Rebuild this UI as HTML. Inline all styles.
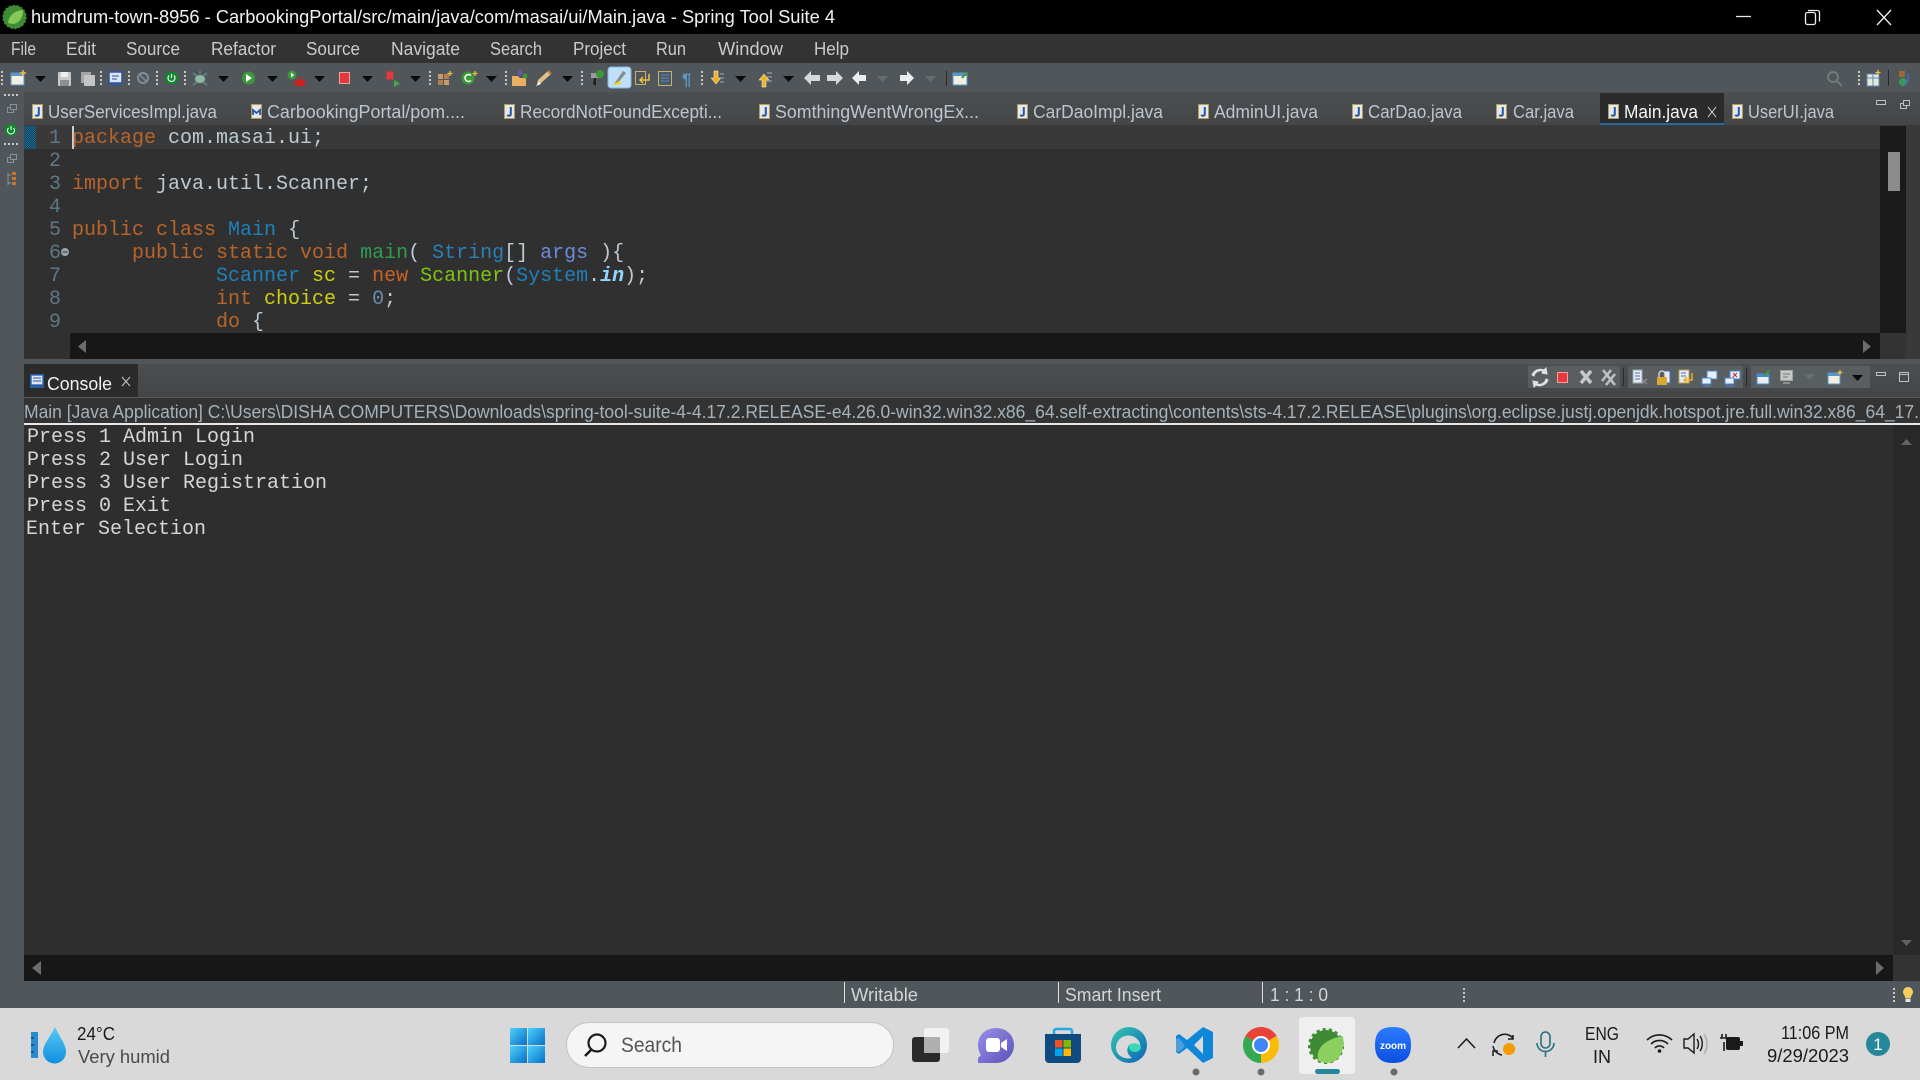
<!DOCTYPE html>
<html><head><meta charset="utf-8"><title>Spring Tool Suite 4</title>
<style>
html,body{margin:0;padding:0;width:1920px;height:1080px;overflow:hidden;background:#000}
svg{display:block;position:absolute;left:0;top:0}
text{font-family:"Liberation Sans",sans-serif;white-space:pre}
.m{font-size:18px;fill:#c8cbcd}
.t{font-size:18px;fill:#bcc6d0}
.c{font-family:"Liberation Mono",monospace;font-size:20px;fill:#bccad4}
.ln{font-family:"Liberation Mono",monospace;font-size:20px;fill:#5f7887}
.k{fill:#b8642a}.ty{fill:#1f80ba}.v{fill:#cfcf10}
.p{font-family:"Liberation Mono",monospace;font-size:20px;fill:#d6d6d6}
.s{font-size:18px;fill:#d2d6d8}
.b{font-size:18px;fill:#1a1a1a}
</style></head><body>
<svg width="1920" height="1080" viewBox="0 0 1920 1080" xmlns="http://www.w3.org/2000/svg">
<defs>
<pattern id="dith" width="2" height="2" patternUnits="userSpaceOnUse"><rect width="2" height="2" fill="#123f55"/><rect width="1" height="1" fill="#1c6a90"/><rect x="1" y="1" width="1" height="1" fill="#1c6a90"/></pattern>
<linearGradient id="tabg" x1="0" y1="0" x2="0" y2="1"><stop offset="0" stop-color="#4c4f51"/><stop offset="1" stop-color="#434547"/></linearGradient>
<linearGradient id="win" x1="0" y1="0" x2="1" y2="1"><stop offset="0" stop-color="#4fd0fb"/><stop offset="1" stop-color="#0670c8"/></linearGradient>
<linearGradient id="drop" x1="0" y1="0" x2="0" y2="1"><stop offset="0" stop-color="#58c8f5"/><stop offset="1" stop-color="#1090e0"/></linearGradient>
<linearGradient id="zm" x1="0" y1="0" x2="0" y2="1"><stop offset="0" stop-color="#2b7cff"/><stop offset="1" stop-color="#0b4fe0"/></linearGradient>
<linearGradient id="tm" x1="0" y1="0" x2="1" y2="1"><stop offset="0" stop-color="#9a8fe8"/><stop offset="1" stop-color="#5a52b8"/></linearGradient>
<linearGradient id="edg" x1="0" y1="0" x2="1" y2="1"><stop offset="0" stop-color="#36c8b0"/><stop offset="1" stop-color="#0a62b8"/></linearGradient>
<g id="jf"><rect x=".5" y=".5" width="10" height="14" fill="#e3e8ef" stroke="#b39a55"/><path d="M6.800 3v7.200c0 1.600-2.400 2-3.600.7" fill="none" stroke="#2a55a0" stroke-width="2"/></g>
<g id="mf"><rect x=".5" y=".5" width="10" height="14" fill="#e3e8ef" stroke="#b39a55"/><path d="M2 11V6l3.500 3L9 6v5" fill="none" stroke="#2a55a0" stroke-width="1.800"/></g>
<path id="ar" d="M0 0h11l-5.500 6z" fill="#0a0a0a"/>
<path id="ag" d="M0 0h11l-5.500 6z" fill="#686d70"/>
<path id="dots" d="M0 0v14" stroke="#c8c8c8" stroke-width="2" stroke-dasharray="2 2" fill="none"/>
</defs>

<!-- title bar -->
<rect width="1920" height="34" fill="#000"/>
<circle cx="14.500" cy="17" r="11.500" fill="#3f8a35" stroke="#3f8a35" stroke-width="1.500" stroke-dasharray="2 2"/><path d="M8 23c1-8 6-12 15-13 0 8-4 14-11 14z" fill="#86c956"/>
<text x="31" y="23" font-size="18" fill="#f2f2f2" textLength="804" lengthAdjust="spacingAndGlyphs">humdrum-town-8956 - CarbookingPortal/src/main/java/com/masai/ui/Main.java - Spring Tool Suite 4</text>
<path d="M1736 16.500h15" stroke="#e8e8e8" stroke-width="1.300"/>
<rect x="1805.500" y="12.500" width="10" height="12" rx="2" fill="none" stroke="#eee" stroke-width="1.300"/><path d="M1808 10.500h9.500a2 2 0 0 1 2 2v9" fill="none" stroke="#eee" stroke-width="1.300"/>
<path d="M1877 10l14 15M1891 10l-14 15" stroke="#eee" stroke-width="1.300"/>

<!-- menu -->
<rect y="34" width="1920" height="29" fill="#333"/>
<text class="m" x="11" y="55" textLength="25" lengthAdjust="spacingAndGlyphs">File</text>
<text class="m" x="66" y="55" textLength="30" lengthAdjust="spacingAndGlyphs">Edit</text>
<text class="m" x="126" y="55" textLength="54" lengthAdjust="spacingAndGlyphs">Source</text>
<text class="m" x="211" y="55" textLength="65" lengthAdjust="spacingAndGlyphs">Refactor</text>
<text class="m" x="306" y="55" textLength="54" lengthAdjust="spacingAndGlyphs">Source</text>
<text class="m" x="391" y="55" textLength="69" lengthAdjust="spacingAndGlyphs">Navigate</text>
<text class="m" x="490" y="55" textLength="52" lengthAdjust="spacingAndGlyphs">Search</text>
<text class="m" x="573" y="55" textLength="53" lengthAdjust="spacingAndGlyphs">Project</text>
<text class="m" x="656" y="55" textLength="30" lengthAdjust="spacingAndGlyphs">Run</text>
<text class="m" x="718" y="55" textLength="65" lengthAdjust="spacingAndGlyphs">Window</text>
<text class="m" x="814" y="55" textLength="35" lengthAdjust="spacingAndGlyphs">Help</text>

<!-- toolbar -->
<rect y="63" width="1920" height="29" fill="#505659"/>
<use href="#dots" x="2" y="71"/>
<rect x="11" y="73" width="13" height="12" fill="#f0efe0" stroke="#5a94c8"/><rect x="11" y="73" width="13" height="3" fill="#5a94c8"/><path d="M23 70v6M20 73h6" stroke="#f0c040" stroke-width="1.500"/>
<use href="#ar" x="35" y="76"/>
<rect x="58" y="72" width="13" height="14" rx="1" fill="#c9c9c9"/><rect x="61" y="72" width="7" height="5" fill="#eee"/><rect x="60" y="80" width="9" height="6" fill="#8f8f8f"/>
<rect x="81" y="72" width="10" height="11" fill="#a5a5a5"/><rect x="84" y="75" width="11" height="11" fill="#c4c4c4"/>
<use href="#dots" x="101" y="71"/>
<rect x="109" y="72" width="13" height="11" fill="#dfe6f2" stroke="#2a55a8" stroke-width="1.500"/><path d="M112 76h7M112 79h5" stroke="#2a55a8"/><path d="M111 85h9" stroke="#2a55a8" stroke-width="1.500"/>
<use href="#dots" x="129" y="71"/>
<circle cx="143" cy="78" r="5" fill="none" stroke="#7f8f9a" stroke-width="2"/><path d="M139 74l8 8" stroke="#7f8f9a" stroke-width="1.500"/>
<use href="#dots" x="157" y="71"/>
<circle cx="171.500" cy="78" r="6.500" fill="#0f8a2a"/><path d="M169 75.500a3.500 3.500 0 1 0 5 0M171.500 74v4" stroke="#eef" fill="none" stroke-width="1.200"/>
<use href="#dots" x="185" y="71"/>
<ellipse cx="200" cy="79" rx="5" ry="4" fill="#8fb8a0"/><path d="M193 73l4 3M207 73l-4 3M193 85l4-3M207 85l-4-3M200 71v3" stroke="#5aa8a0"/>
<use href="#ar" x="218" y="76"/>
<circle cx="248.500" cy="78" r="6.500" fill="#3a9a3a"/><path d="M246 74l6 4-6 4z" fill="#fff"/>
<use href="#ar" x="267" y="76"/>
<circle cx="292" cy="75" r="4.500" fill="#3a9a3a"/><path d="M291 72.500l3 2.500-3 2.500z" fill="#fff"/><rect x="295" y="80" width="10" height="6" fill="#d02020"/><path d="M298 80v-2h4v2" stroke="#d02020" fill="none"/>
<use href="#ar" x="314" y="76"/>
<rect x="339.500" y="72.500" width="10" height="11" fill="#e23a3a" stroke="#f0a0a0"/>
<use href="#ar" x="362" y="76"/>
<rect x="386.500" y="71.500" width="7" height="8" fill="#e23a3a"/><path d="M394 80l6 3.500-6 3.500z" fill="#4aa84a"/>
<use href="#ar" x="410" y="76"/>
<use href="#dots" x="430" y="71"/>
<rect x="438" y="74" width="5" height="5" fill="#c89a6a"/><rect x="444" y="74" width="5" height="5" fill="#b08050"/><rect x="438" y="80" width="5" height="5" fill="#b08050"/><rect x="444" y="80" width="5" height="5" fill="#c89a6a"/><path d="M450 71v5M447.500 73.500h5" stroke="#f0c040" stroke-width="1.300"/>
<circle cx="468" cy="78" r="6.500" fill="#3a9a3a"/><path d="M471 75.500a3.500 3.500 0 1 0 0 5" stroke="#fff" fill="none" stroke-width="1.500"/><path d="M475 71v5M472.500 73.500h5" stroke="#f0c040" stroke-width="1.300"/>
<use href="#ar" x="486" y="76"/>
<use href="#dots" x="506" y="71"/>
<path d="M512 76h6l2 2h6v8h-14z" fill="#e8b060"/><circle cx="520" cy="73" r="2.500" fill="#7050b0"/><circle cx="525" cy="76" r="2.500" fill="#3a9a3a"/>
<path d="M537 84l4-1 10-9-3-3-10 9z" fill="#e0c090"/><path d="M536 86l3-4 2 2z" fill="#fff"/><path d="M548 71l3 3" stroke="#c88030" stroke-width="2"/>
<use href="#ar" x="562" y="76"/>
<use href="#dots" x="582" y="71"/>
<rect x="591" y="73" width="8" height="5" fill="#9a9aa5"/><circle cx="600" cy="74" r="4" fill="#3a9a3a"/><path d="M594 78h2v8l-3-2z" fill="#222"/>
<rect x="608" y="67" width="23" height="21" rx="3" fill="#bfe0f8" stroke="#7fb8e8"/><path d="M623 71l3 2-8 10-4 1z" fill="#8a8f8a"/><path d="M612 85l10-1-3-3z" fill="#f0d020"/>
<rect x="635.500" y="71.500" width="10" height="13" fill="none" stroke="#c8b070"/><path d="M649 74v6h-8m2-3l-3 3 3 3" fill="none" stroke="#f0c040" stroke-width="1.500"/>
<rect x="658.500" y="71.500" width="13" height="14" fill="#4a5a66" stroke="#c8b070"/><path d="M661 75h8M661 78h8M661 81h8" stroke="#5a88b8"/>
<text x="682" y="85" font-size="17" font-weight="bold" fill="#5a98c8">¶</text>
<use href="#dots" x="702" y="71"/>
<path d="M714 71h4v7h3l-5 6-5-6h3z" fill="#f0b020" stroke="#fff" stroke-width=".5"/><path d="M720 74h4M720 78h4M720 82h4" stroke="#aab"/>
<use href="#ar" x="735" y="76"/>
<path d="M762 87h4v-7h3l-5-6-5 6h3z" fill="#f0b020" stroke="#fff" stroke-width=".5"/><path d="M767 73h5M767 77h5M767 81h5" stroke="#aab"/>
<use href="#ar" x="783" y="76"/>
<path d="M804 78l7-7v4h9v6h-9v4z" fill="#d8d8d8"/><path d="M843 78l-7-7v4h-9v6h9v4z" fill="#d8d8d8"/>
<path d="M852 78l7-7v4h7v6h-7v4z" fill="#ececec"/><use href="#ag" x="877" y="76"/>
<path d="M914 78l-7-7v4h-7v6h7v4z" fill="#ececec"/><use href="#ag" x="925" y="76"/>
<path d="M946.500 71v15" stroke="#2a2a2a"/>
<rect x="953" y="73" width="14" height="12" fill="#f0efe0" stroke="#5a94c8"/><rect x="953" y="73" width="14" height="3" fill="#5a94c8"/><path d="M962 78l5-6" stroke="#3a9a3a" stroke-width="2"/>
<circle cx="1833" cy="77" r="5" fill="none" stroke="#74797c" stroke-width="2"/><path d="M1837 81l5 5" stroke="#74797c" stroke-width="2"/>
<use href="#dots" x="1859" y="71"/>
<rect x="1867" y="74" width="12" height="12" fill="#e8e8d8" stroke="#5a88b8"/><path d="M1867 78h12M1873 74v12" stroke="#5a88b8"/><path d="M1878 70v5M1875.500 72.500h5" stroke="#f0c040" stroke-width="1.300"/>
<path d="M1888.500 70v16" stroke="#2a2a2a"/>
<rect x="1899" y="71" width="6" height="6" fill="#9a6a3a"/><circle cx="1903" cy="82" r="4" fill="#3a9a5a"/><path d="M1908 73v8l-3 4" stroke="#3a70c0" fill="none" stroke-width="1.500"/>

<!-- left trim -->
<rect x="0" y="92" width="24" height="916" fill="#505659"/>
<path d="M4 95h14" stroke="#c8c8c8" stroke-width="2" stroke-dasharray="2 2"/>
<rect x="7.500" y="107.500" width="6" height="5" fill="none" stroke="#8a9094"/><rect x="10.500" y="104.500" width="6" height="5" fill="#50565a" stroke="#8a9094"/>
<circle cx="11" cy="130" r="6" fill="#0f8a2a"/><path d="M8.500 128a3.500 3.500 0 1 0 5 0M11 126v4" stroke="#fff" fill="none"/>
<path d="M4 144h14" stroke="#c8c8c8" stroke-width="2" stroke-dasharray="2 2"/>
<rect x="7.500" y="157.500" width="6" height="5" fill="none" stroke="#8a9094"/><rect x="10.500" y="154.500" width="6" height="5" fill="#50565a" stroke="#8a9094"/>
<path d="M8 173v12M8 175h3M8 183h3" stroke="#8a9094" fill="none"/><path d="M12 172h4v3h-4zM12 177h4v3h-4zM12 182h4v3h-4z" fill="#c87820"/>

<!-- editor tabs -->
<rect x="24" y="92" width="1896" height="33" fill="url(#tabg)"/>
<rect x="1600" y="93" width="124" height="30" fill="#2b2b2b"/>
<rect x="1600" y="123" width="124" height="3" fill="#2a6a9a"/>
<rect x="24" y="125" width="1896" height="1" fill="#3a3a3a"/>
<use href="#jf" x="32" y="104"/><text class="t" x="48" y="118" textLength="169" lengthAdjust="spacingAndGlyphs">UserServicesImpl.java</text>
<use href="#mf" x="251" y="104"/><text class="t" x="267" y="118" textLength="198" lengthAdjust="spacingAndGlyphs">CarbookingPortal/pom....</text>
<use href="#jf" x="504" y="104"/><text class="t" x="520" y="118" textLength="202" lengthAdjust="spacingAndGlyphs">RecordNotFoundExcepti...</text>
<use href="#jf" x="759" y="104"/><text class="t" x="775" y="118" textLength="204" lengthAdjust="spacingAndGlyphs">SomthingWentWrongEx...</text>
<use href="#jf" x="1017" y="104"/><text class="t" x="1033" y="118" textLength="130" lengthAdjust="spacingAndGlyphs">CarDaoImpl.java</text>
<use href="#jf" x="1198" y="104"/><text class="t" x="1214" y="118" textLength="104" lengthAdjust="spacingAndGlyphs">AdminUI.java</text>
<use href="#jf" x="1352" y="104"/><text class="t" x="1368" y="118" textLength="94" lengthAdjust="spacingAndGlyphs">CarDao.java</text>
<use href="#jf" x="1496" y="104"/><text class="t" x="1513" y="118" textLength="61" lengthAdjust="spacingAndGlyphs">Car.java</text>
<use href="#jf" x="1608" y="104"/><text class="t" x="1624" y="118" textLength="74" lengthAdjust="spacingAndGlyphs" style="fill:#f4f6f8">Main.java</text>
<path d="M1708 107l8 10M1716 107l-8 10" stroke="#ddd"/>
<use href="#jf" x="1732" y="104"/><text class="t" x="1748" y="118" textLength="86" lengthAdjust="spacingAndGlyphs">UserUI.java</text>
<rect x="1876.500" y="100.500" width="9" height="4" fill="none" stroke="#c0c0c0"/>
<rect x="1900.500" y="103.500" width="6" height="5" fill="none" stroke="#c0c0c0"/><rect x="1903.500" y="100.500" width="6" height="5" fill="#46484a" stroke="#c0c0c0"/>

<!-- editor -->
<rect x="24" y="126" width="1896" height="233" fill="#303030"/>
<rect x="24" y="126" width="1856" height="23" fill="#393939"/>
<rect x="24" y="126" width="12" height="23" fill="url(#dith)"/>
<rect x="1880" y="126" width="26" height="207" fill="#1a1a1a"/>
<rect x="1906" y="126" width="14" height="233" fill="#393939"/>
<rect x="1888" y="152" width="12" height="39" fill="#8c8c8c"/>
<rect x="70" y="333" width="1810" height="26" fill="#171717"/>
<rect x="1880" y="333" width="26" height="26" fill="#333"/>
<path d="M86 340v13l-8-6.500z" fill="#686d70"/><path d="M1863 340v13l8-6.500z" fill="#686d70"/>
<text class="ln" x="49" y="143">1</text>
<text class="ln" x="49" y="166">2</text>
<text class="ln" x="49" y="189">3</text>
<text class="ln" x="49" y="212">4</text>
<text class="ln" x="49" y="235">5</text>
<text class="ln" x="49" y="258">6</text>
<text class="ln" x="49" y="281">7</text>
<text class="ln" x="49" y="304">8</text>
<text class="ln" x="49" y="327">9</text>
<circle cx="65" cy="252" r="4" fill="#9aa5ad"/><path d="M62.500 252h5" stroke="#303030"/>
<rect x="72" y="126" width="2" height="23" fill="#c8d0d8"/>
<text class="c" x="72" y="143"><tspan class="k">package</tspan> com.masai.ui;</text>
<text class="c" x="72" y="189"><tspan class="k">import</tspan> java.util.Scanner;</text>
<text class="c" x="72" y="235"><tspan class="k">public class</tspan> <tspan class="ty">Main</tspan> {</text>
<text class="c" x="132" y="258"><tspan class="k">public static void</tspan> <tspan fill="#2c9e50">main</tspan>( <tspan fill="#2a80b8">String</tspan>[] <tspan fill="#6a8cd8">args</tspan> ){</text>
<text class="c" x="216" y="281"><tspan class="ty">Scanner</tspan> <tspan class="v">sc</tspan> = <tspan fill="#c86420">new</tspan> <tspan fill="#7cc410">Scanner</tspan>(<tspan class="ty">System</tspan>.<tspan fill="#90d8ff" font-weight="bold" font-style="italic">in</tspan>);</text>
<text class="c" x="216" y="304"><tspan class="k">int</tspan> <tspan class="v">choice</tspan> = <tspan fill="#6a8ca8">0</tspan>;</text>
<text class="c" x="216" y="327"><tspan class="k">do</tspan> {</text>

<!-- sash -->
<rect x="24" y="359" width="1896" height="5" fill="#505659"/>

<!-- console -->
<rect x="24" y="364" width="1896" height="33" fill="url(#tabg)"/>
<rect x="24" y="364" width="114" height="33" fill="#2b2b2b"/>
<rect x="31" y="375" width="12" height="10" fill="#dfe6f2" stroke="#2a70c0" stroke-width="1.500"/><path d="M33 378h8M33 381h8" stroke="#2a55a8"/><path d="M30 387h14" stroke="#2a70c0" stroke-width="1.500"/>
<text class="t" x="47" y="390" textLength="65" lengthAdjust="spacingAndGlyphs" style="fill:#f0f2f4">Console</text>
<path d="M122 377l8 9M130 377l-8 9" stroke="#ccc"/>
<rect x="1528" y="366" width="92" height="22" fill="#595e61"/>
<rect x="1628" y="366" width="115" height="22" fill="#595e61"/>
<rect x="1751" y="366" width="119" height="22" fill="#595e61"/>
<path d="M1623.500 368v18M1746.500 368v18" stroke="#2a2a2a"/>
<path d="M1534 376a7 7 0 0 1 9-5l-1 2 5 1-1-6-2 2a9 9 0 0 0-12 5zM1546 379a7 7 0 0 1-9 5l1-2-5-1 1 6 2-2a9 9 0 0 0 12-5z" fill="#e0e0e0" stroke="#e0e0e0"/>
<rect x="1557.500" y="372.500" width="10" height="10" fill="#e83a3a" stroke="#f4a0a0"/>
<path d="M1581 371l10 12M1591 371l-10 12" stroke="#c8c8c8" stroke-width="3.500"/>
<path d="M1603 370l9 11M1611 370l-9 11M1606 374l9 11M1615 374l-9 11" stroke="#c0c0c0" stroke-width="2.500"/>
<rect x="1633" y="370" width="9" height="13" fill="#e8ecf0" stroke="#9aa"/><path d="M1635 373h5M1635 376h5M1635 379h5" stroke="#4a70c0"/><path d="M1642 379l5 5M1647 379l-5 5" stroke="#888" stroke-width="1.500"/>
<rect x="1664" y="371" width="6" height="12" fill="#e8ecf0" stroke="#4a70c0"/><rect x="1657" y="377" width="10" height="8" fill="#d8a830"/><path d="M1659 377v-3a3 3 0 0 1 6 0v3" fill="none" stroke="#e0e0c0" stroke-width="1.300"/>
<rect x="1679" y="370" width="10" height="13" fill="#e8ecf0" stroke="#b8a060"/><path d="M1681 373h5M1681 376h5" stroke="#4a70c0"/><path d="M1692 373v7h-7m2-3l-3 3 3 3" fill="none" stroke="#f0b020" stroke-width="1.500"/>
<rect x="1707" y="371" width="10" height="8" fill="#e8f0fa" stroke="#4a88d0"/><rect x="1702" y="378" width="9" height="6" fill="#e8f0fa" stroke="#4a88d0"/><path d="M1703 386h8" stroke="#4a88d0"/>
<rect x="1730" y="371" width="10" height="8" fill="#e8f0fa" stroke="#4a88d0"/><path d="M1733 373l4 4M1737 373l-4 4" stroke="#d02020"/><rect x="1725" y="378" width="9" height="6" fill="#e8f0fa" stroke="#4a88d0"/><path d="M1726 386h8" stroke="#4a88d0"/>
<rect x="1757" y="374" width="12" height="10" fill="#e8f0f4" stroke="#4a88d0"/><rect x="1757" y="374" width="12" height="3" fill="#4a88d0"/><path d="M1764 376l5-6" stroke="#3a9a3a" stroke-width="2"/>
<rect x="1780.500" y="370.500" width="12" height="10" fill="#c8c8c8" stroke="#a0a0a0"/><path d="M1783 374h7M1783 377h5" stroke="#777"/><path d="M1783 383h7" stroke="#a0a0a0" stroke-width="1.500"/>
<use href="#ag" x="1804" y="374"/>
<rect x="1828" y="373" width="12" height="11" fill="#f0efe0" stroke="#5a94c8"/><rect x="1828" y="373" width="12" height="3" fill="#5a94c8"/><path d="M1840 370v5M1837.500 372.500h5" stroke="#f0c040" stroke-width="1.300"/>
<use href="#ar" x="1852" y="375"/>
<rect x="1876.500" y="372.500" width="9" height="3" fill="none" stroke="#c0c0c0"/>
<rect x="1899.500" y="372.500" width="9" height="9" fill="none" stroke="#c0c0c0"/><path d="M1899 374.500h10" stroke="#c0c0c0"/>
<rect x="24" y="397" width="1896" height="26" fill="#333"/>
<rect x="24" y="397" width="1896" height="1" fill="#55595b"/>
<text x="24" y="418" font-size="18" fill="#a4b2bc" textLength="1895" lengthAdjust="spacingAndGlyphs">Main [Java Application] C:\Users\DISHA COMPUTERS\Downloads\spring-tool-suite-4-4.17.2.RELEASE-e4.26.0-win32.win32.x86_64.self-extracting\contents\sts-4.17.2.RELEASE\plugins\org.eclipse.justj.openjdk.hotspot.jre.full.win32.x86_64_17.</text>
<rect x="24" y="423" width="1896" height="2" fill="#e8e8e8"/>
<rect x="24" y="425" width="1869" height="530" fill="#2e2e2e"/>
<rect x="1893" y="425" width="27" height="530" fill="#282828"/>
<path d="M1901 445l5.500-6 5.500 6z" fill="#5e6366"/><path d="M1901 940l5.500 6 5.500-6z" fill="#5e6366"/>
<text class="p" x="27" y="442">Press 1 Admin Login</text>
<text class="p" x="27" y="465">Press 2 User Login</text>
<text class="p" x="27" y="488">Press 3 User Registration</text>
<text class="p" x="27" y="511">Press 0 Exit</text>
<text class="p" x="26" y="534">Enter Selection</text>
<rect x="24" y="955" width="1869" height="26" fill="#171717"/>
<rect x="1893" y="955" width="27" height="26" fill="#333"/>
<path d="M41 961v14l-9-7z" fill="#686d70"/><path d="M1876 961v14l8-7z" fill="#686d70"/>

<!-- status bar -->
<rect y="981" width="1920" height="27" fill="#505659"/>
<path d="M844.500 982v21M1058.500 982v21M1262.500 982v21" stroke="#e0e0e0"/>
<text class="s" x="851" y="1001" textLength="67" lengthAdjust="spacingAndGlyphs">Writable</text>
<text class="s" x="1065" y="1001" textLength="96" lengthAdjust="spacingAndGlyphs">Smart Insert</text>
<text class="s" x="1270" y="1001" textLength="58" lengthAdjust="spacingAndGlyphs">1 : 1 : 0</text>
<path d="M1464 988v14M1894 988v14" stroke="#c8c8c8" stroke-width="2" stroke-dasharray="2 2"/>
<path d="M1908 987a5 5 0 0 1 3.500 8.500l-1 3h-5l-1-3a5 5 0 0 1 3.500-8.500z" fill="#f4cf60"/><rect x="1905.500" y="999" width="5" height="3" fill="#dfe6ef"/>

<!-- taskbar -->
<rect y="1008" width="1920" height="72" fill="#d9d9d9"/>
<rect x="31" y="1032" width="7" height="26" fill="#2a8ad0"/><path d="M31 1038h3M31 1045h3M31 1052h3" stroke="#123"/>
<path d="M55 1027c4 9 11 17 11 25a11 11 0 0 1-23 0c0-8 8-16 12-25z" fill="url(#drop)"/>
<text class="b" x="77" y="1040" textLength="38" lengthAdjust="spacingAndGlyphs">24°C</text>
<text x="78" y="1063" font-size="18" fill="#4a4a4a" textLength="92" lengthAdjust="spacingAndGlyphs">Very humid</text>
<rect x="510" y="1028" width="17" height="17" fill="url(#win)"/><rect x="528" y="1028" width="17" height="17" fill="url(#win)"/><rect x="510" y="1046" width="17" height="17" fill="url(#win)"/><rect x="528" y="1046" width="17" height="17" fill="url(#win)"/>
<rect x="566.500" y="1022.500" width="327" height="45" rx="22.500" fill="#f5f5f5" stroke="#c4c4c4"/>
<circle cx="597" cy="1043" r="8.500" fill="none" stroke="#1a1a1a" stroke-width="2.200"/><path d="M591 1050l-6 6" stroke="#1a1a1a" stroke-width="2.500"/>
<text x="621" y="1052" font-size="21" fill="#555" textLength="61" lengthAdjust="spacingAndGlyphs">Search</text>
<rect x="912" y="1037" width="28" height="25" rx="3" fill="#2a2a2a"/><rect x="924" y="1028" width="25" height="25" rx="3" fill="#f4f4f4" fill-opacity=".9"/><rect x="924" y="1037" width="16" height="16" fill="#b0b0b0"/>
<!-- teams -->
<path d="M996 1028c10 0 18 7 18 17s-8 18-18 18h-18v-5l3-3c-2-3-3-6-3-10 0-10 8-17 18-17z" fill="url(#tm)"/><rect x="986" y="1038" width="14" height="14" rx="3" fill="#fff"/><path d="M1001 1043l6-4v12l-6-4z" fill="#fff"/>
<!-- store -->
<path d="M1045 1034h36v25a4 4 0 0 1-4 4h-28a4 4 0 0 1-4-4z" fill="#0f4a80"/><path d="M1054 1034v-3a2 2 0 0 1 2-2h14a2 2 0 0 1 2 2v3" fill="none" stroke="#2aa8e0" stroke-width="2.500"/>
<rect x="1055" y="1040" width="7.500" height="7.500" fill="#f25022"/><rect x="1063.500" y="1040" width="7.500" height="7.500" fill="#7fba00"/><rect x="1055" y="1048.500" width="7.500" height="7.500" fill="#00a4ef"/><rect x="1063.500" y="1048.500" width="7.500" height="7.500" fill="#ffb900"/>
<!-- edge -->
<circle cx="1129" cy="1045" r="18" fill="url(#edg)"/><path d="M1116 1048c0-9 8-14 16-12 6 2 9 7 8 11-5 2-9 1-11-2-3 4-2 10 3 13-8 2-16-3-16-10z" fill="#d9d9d9"/><path d="M1129 1045c4-3 10-2 12 2 0 3-3 5-6 5-4 0-7-3-6-7z" fill="#3ad8b8"/>
<!-- vscode -->
<path d="M1203 1027l10 5v26l-10 5-16-15-8 6-3-2v-16l3-2 8 6z" fill="#0f86d8"/><path d="M1203 1036l-9 9 9 9z" fill="#d9d9d9"/><path d="M1179 1038l-3 1v12l3 1 6-6z" fill="#d9d9d9" fill-opacity=".3"/>
<circle cx="1196" cy="1072" r="3.500" fill="#6a6a6a"/>
<!-- chrome -->
<path d="M1261 1045L1245.400 1036A18 18 0 0 1 1276.600 1036z" fill="#ea4335"/>
<path d="M1261 1045L1245.400 1036A18 18 0 0 0 1261 1063z" fill="#34a853"/>
<path d="M1261 1045L1276.600 1036A18 18 0 0 1 1261 1063z" fill="#fbbc05"/>
<circle cx="1261" cy="1045" r="9" fill="#fff"/><circle cx="1261" cy="1045" r="7" fill="#4285f4"/>
<circle cx="1261" cy="1072" r="3.500" fill="#6a6a6a"/>
<!-- spring -->
<rect x="1299" y="1017" width="56" height="57" rx="4" fill="#efefef"/>
<circle cx="1326" cy="1046" r="16" fill="#3f8a35" stroke="#3f8a35" stroke-width="4" stroke-dasharray="3 3"/>
<path d="M1318 1060c-2-10 4-20 25-24 2 14-3 26-15 27-4 0-8-1-10-3z" fill="#8ccf5f"/>
<rect x="1315" y="1069" width="25" height="5" rx="2.500" fill="#26879a"/>
<!-- zoom -->
<path d="M1393 1027c13 0 18 6 18 18s-5 18-18 18-18-6-18-18 5-18 18-18z" fill="url(#zm)"/>
<text x="1393" y="1049" font-size="10" fill="#fff" text-anchor="middle" font-weight="bold">zoom</text>
<circle cx="1394" cy="1072" r="3.500" fill="#6a6a6a"/>
<!-- tray -->
<path d="M1458 1048l8.500-9 8.500 9" fill="none" stroke="#1a1a1a" stroke-width="1.500"/>
<path d="M1494 1043a11 11 0 0 1 19-5M1513 1035v4h-5M1493 1046a11 11 0 0 0 9 9M1493 1056v-5h5" fill="none" stroke="#1a1a1a" stroke-width="1.500"/>
<circle cx="1509" cy="1049" r="6" fill="#f59a00"/>
<rect x="1541" y="1032" width="9" height="16" rx="4.500" fill="none" stroke="#2a6f80" stroke-width="1.600"/><path d="M1537 1043a8.500 8.500 0 0 0 17 0M1545.500 1052v5" fill="none" stroke="#2a6f80" stroke-width="1.600"/>
<text class="b" x="1585" y="1040" textLength="34" lengthAdjust="spacingAndGlyphs">ENG</text>
<text class="b" x="1593" y="1063" textLength="18" lengthAdjust="spacingAndGlyphs">IN</text>
<path d="M1647 1040a18 18 0 0 1 25 0M1651 1044a12 12 0 0 1 17 0M1655 1048a6 6 0 0 1 9 0" fill="none" stroke="#1a1a1a" stroke-width="1.600"/><circle cx="1659.500" cy="1051" r="1.800" fill="#1a1a1a"/>
<path d="M1684 1039h4l6-5v19l-6-5h-4z" fill="none" stroke="#1a1a1a" stroke-width="1.400"/><path d="M1697 1039c2 3 2 7 0 10M1700 1036c3 4 3 11 0 15" fill="none" stroke="#1a1a1a" stroke-width="1.400"/><path d="M1704 1034c4 6 4 14 0 20" fill="none" stroke="#a8a8a8" stroke-width="1.300"/>
<rect x="1726" y="1037" width="14" height="13" rx="2" fill="#1a1a1a"/><rect x="1740" y="1041" width="3" height="5" fill="#1a1a1a"/><path d="M1720 1038h8M1722 1034v4M1726 1034v4M1724 1042v9" stroke="#1a1a1a" stroke-width="1.600"/>
<text class="b" x="1781" y="1039" textLength="68" lengthAdjust="spacingAndGlyphs">11:06 PM</text>
<text class="b" x="1767" y="1062" textLength="82" lengthAdjust="spacingAndGlyphs">9/29/2023</text>
<circle cx="1878" cy="1044" r="12" fill="#26879a"/>
<text x="1878" y="1050" font-size="17" fill="#fff" text-anchor="middle">1</text>
</svg>
</body></html>
